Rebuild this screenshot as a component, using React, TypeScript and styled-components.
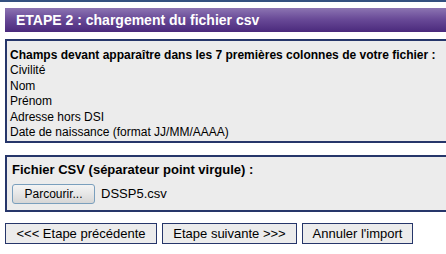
import styled, { createGlobalStyle } from "styled-components";

const GlobalStyle = createGlobalStyle`
  html, body {
    margin: 0;
    padding: 0;
    background: #fff;
    overflow: hidden;
  }
  body {
    font-family: "Liberation Sans", Arial, sans-serif;
    font-size: 12px;
    color: #000;
  }
`;

const Page = styled.div`
  width: 470px;
  border-top: 2px solid #34507f;
  padding: 6px 0 0 5px;
  display: flex;
  flex-direction: column;
`;

const StepTitle = styled.h2`
  margin: 0;
  height: 24px;
  padding-left: 11px;
  display: flex;
  align-items: center;
  font-size: 14px;
  font-weight: bold;
  color: #fff;
  background: linear-gradient(to bottom, #8c74b2 0%, #6a4b98 45%, #4a2a7c 100%);
`;

const Panel = styled.div<{ $top: number }>`
  margin-top: ${({ $top }) => $top}px;
  border: 2px solid #26366a;
  background: #ececec;
`;

const FieldsPanel = styled(Panel)`
  padding: 7px 3px 1px 3px;
  line-height: 15.4px;
`;

const FilePanel = styled(Panel)`
  padding: 5px 5px 6px 5px;
  font-size: 13px;
  line-height: 16px;
`;

const PanelLabel = styled.div`
  font-weight: bold;
`;

const FieldLine = styled.div``;

const FileRow = styled.div`
  display: flex;
  align-items: center;
  gap: 6px;
  margin-top: 6px;
`;

const BrowseButton = styled.button`
  font-family: inherit;
  font-size: 12px;
  color: #000;
  height: 20px;
  width: 83px;
  padding: 0;
  border: 1px solid #7a9fbd;
  border-radius: 3px;
  background: linear-gradient(to bottom, #f4f4f4 0%, #e6e6e6 50%, #d6d6d6 100%);
`;

const FileName = styled.span``;

const Actions = styled.div`
  display: flex;
  gap: 5px;
  margin-top: 11px;
`;

const ActionButton = styled.button<{ $w: number }>`
  font-family: inherit;
  font-size: 13px;
  color: #000;
  height: 21px;
  width: ${({ $w }) => $w}px;
  padding: 0;
  border: 1px solid #26366a;
  background: #ececec;
`;

export default function App() {
  return (
    <>
      <GlobalStyle />
      <Page>
        <StepTitle>ETAPE 2 : chargement du fichier csv</StepTitle>
        <FieldsPanel $top={7}>
          <PanelLabel>
            Champs devant apparaître dans les 7 premières colonnes de votre fichier :
          </PanelLabel>
          <FieldLine>Civilité</FieldLine>
          <FieldLine>Nom</FieldLine>
          <FieldLine>Prénom</FieldLine>
          <FieldLine>Adresse hors DSI</FieldLine>
          <FieldLine>Date de naissance (format JJ/MM/AAAA)</FieldLine>
        </FieldsPanel>
        <FilePanel $top={12}>
          <PanelLabel>Fichier CSV (séparateur point virgule) :</PanelLabel>
          <FileRow>
            <BrowseButton type="button">Parcourir...</BrowseButton>
            <FileName>DSSP5.csv</FileName>
          </FileRow>
        </FilePanel>
        <Actions>
          <ActionButton type="button" $w={152}>&lt;&lt;&lt; Etape précédente</ActionButton>
          <ActionButton type="button" $w={135}>Etape suivante &gt;&gt;&gt;</ActionButton>
          <ActionButton type="button" $w={111}>Annuler l'import</ActionButton>
        </Actions>
      </Page>
    </>
  );
}
